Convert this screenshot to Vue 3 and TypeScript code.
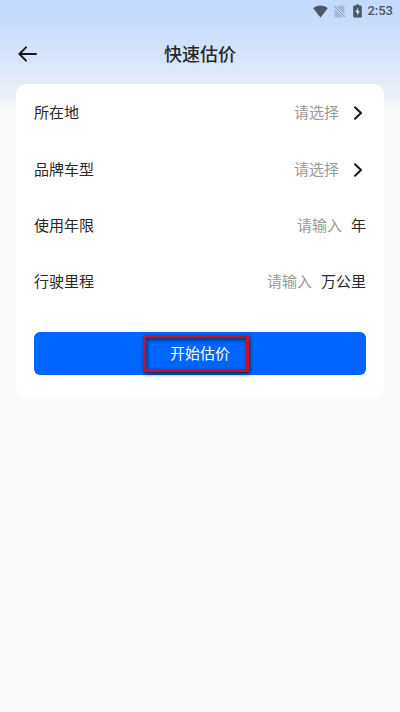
<script setup lang="ts">
import { ref } from 'vue'

interface Picker {
  id: string
  label: string
  options: string[]
}

interface Entry {
  id: string
  label: string
  unit: string
}

const pickers: Picker[] = [
  { id: 'location', label: '所在地', options: [] },
  { id: 'model', label: '品牌车型', options: [] },
]

const entries: Entry[] = [
  { id: 'years', label: '使用年限', unit: '年' },
  { id: 'mileage', label: '行驶里程', unit: '万公里' },
]

const values = ref<Record<string, string>>({ location: '', model: '', years: '', mileage: '' })
</script>

<template>
  <div class="page">
    <div class="status">
      <svg width="15" height="13" viewBox="0 0 15 13" aria-hidden="true">
        <path d="M0.2 3.2C4.2 -0.3 10.8 -0.3 14.8 3.2L7.5 12.6Z" fill="#4d5667" />
      </svg>
      <svg class="sim" width="11" height="13" viewBox="0 0 11 13" aria-hidden="true">
        <path d="M4 0.5H9.6Q10.5 0.5 10.5 1.4V9.4L2.6 1.9Z" fill="#a9b8d2" />
        <path d="M0.5 3.2L9.4 12.4H1.4Q0.5 12.4 0.5 11.5Z" fill="#a9b8d2" />
        <path d="M0.4 1L10.7 12" stroke="#8390a8" stroke-width="1" />
      </svg>
      <svg class="battery" width="9" height="14" viewBox="0 0 9 14" aria-hidden="true">
        <path d="M3 0.4H6V1.6H8Q8.8 1.6 8.8 2.4V12.8Q8.8 13.6 8 13.6H1Q0.2 13.6 0.2 12.8V2.4Q0.2 1.6 1 1.6H3Z" fill="#4d5667" />
        <path d="M5.1 3.8L2.2 8.2H4.1V11.6L6.9 7H5.1Z" fill="#d6e5fd" />
      </svg>
      <time class="clock">2:53</time>
    </div>

    <header class="bar">
      <button class="back" type="button" aria-label="返回">
        <svg width="20" height="16" viewBox="0 0 20 16" fill="none" stroke="#15171c" stroke-width="2" stroke-linecap="round" stroke-linejoin="round">
          <path d="M18 8H2M8 1.4L1.4 8L8 14.6" />
        </svg>
      </button>
      <h1 class="title">快速估价</h1>
    </header>

    <form class="card" @submit.prevent>
      <div v-for="p in pickers" :key="p.id" class="row">
        <label class="label" :for="p.id">{{ p.label }}</label>
        <select :id="p.id" v-model="values[p.id]" class="field choice">
          <option value="">请选择</option>
          <option v-for="o in p.options" :key="o">{{ o }}</option>
        </select>
        <svg class="chevron" width="10" height="14" viewBox="0 0 10 14" fill="none" stroke="#15171c" stroke-width="2" stroke-linecap="round" stroke-linejoin="round" aria-hidden="true">
          <path d="M2 1.2L8 7L2 12.8" />
        </svg>
      </div>

      <div v-for="e in entries" :key="e.id" class="row">
        <label class="label" :for="e.id">{{ e.label }}</label>
        <input :id="e.id" v-model="values[e.id]" class="field" type="text" inputmode="decimal" placeholder="请输入" />
        <span class="unit">{{ e.unit }}</span>
      </div>

      <button class="submit" type="submit">
        开始估价
        <span class="marker" aria-hidden="true"></span>
      </button>
    </form>
  </div>
</template>

<style>
body {
  background: #fafafa;
}
</style>

<style scoped>
.page {
  font-family: Roboto, "Noto Sans CJK SC", sans-serif;
  font-size: 15px;
  line-height: 24px;
  color: #292929;
  background: linear-gradient(180deg, #c3d9fd 0, #c9dcfd 24px, #e6ebf8 84px, #eceff8 98px, #fafafa 108px);
  padding-bottom: 16px;
}

.status {
  display: flex;
  align-items: center;
  justify-content: flex-end;
  height: 22px;
  padding-right: 7px;
}

.sim {
  margin-left: 6px;
}

.battery {
  margin: 0 5px 0 8px;
}

.clock {
  font-size: 13px;
  font-weight: 500;
  line-height: 22px;
  color: #4d5667;
}

.bar {
  display: grid;
  grid-template-columns: 56px 1fr 56px;
  align-items: center;
  padding-top: 2px;
  height: 60px;
}

.back {
  display: flex;
  padding: 8px 18px;
  border: 0;
  background: none;
}

.title {
  grid-column: 2;
  margin: 0;
  padding-top: 2px;
  font-size: 18px;
  font-weight: 500;
  text-align: center;
}

.card {
  margin: 0 16px;
  padding: 1px 18px 22px;
  border-radius: 11px;
  background: #fff;
}

.row {
  display: flex;
  align-items: center;
  height: 56px;
}

.row + .row {
  border-top: 1px solid transparent;
  box-sizing: border-box;
}

.label {
  flex: none;
}

.field {
  flex: 1;
  min-width: 0;
  height: 32px;
  padding: 0;
  border: 0;
  outline: 0;
  background: none;
  font: inherit;
  color: #999;
  text-align: right;
}

.field::placeholder {
  color: #999;
  opacity: 1;
}

.choice {
  appearance: none;
  text-align-last: right;
}

.chevron {
  flex: none;
  margin: 0 3px 0 14px;
}

.unit {
  flex: none;
  margin-left: 9px;
}

.submit {
  position: relative;
  display: block;
  width: 100%;
  height: 43px;
  margin-top: 23px;
  padding: 0;
  border: 0;
  border-radius: 6px;
  background: #0165ff;
  font: inherit;
  color: #fff;
}

.marker {
  position: absolute;
  top: 3px;
  left: calc(50% - 57px);
  box-sizing: border-box;
  width: 106px;
  height: 37px;
  border: 3px solid #d10e1b;
  box-shadow: 1px 2px 4px rgba(0, 0, 0, 0.65), inset 1px 2px 4px rgba(0, 0, 0, 0.55);
}
</style>
